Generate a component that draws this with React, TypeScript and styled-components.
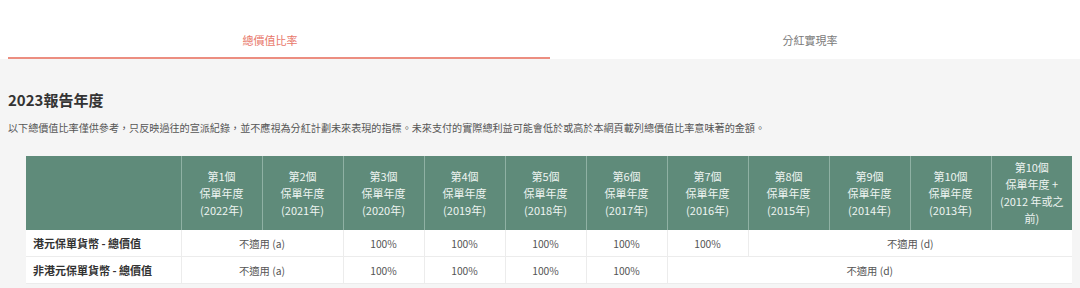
import React from "react";
import styled, { createGlobalStyle } from "styled-components";

const Global = createGlobalStyle`
  html, body { margin: 0; padding: 0; background: #f5f5f5; }
  body { font-family: "Noto Sans CJK TC", "Noto Sans", sans-serif; }
`;

const Page = styled.div`
  width: 1080px;
  height: 288px;
  overflow: hidden;
  background: #f5f5f5;
`;

const TabBar = styled.div`
  display: flex;
  background: #ffffff;
  height: 59px;
`;

const Tab = styled.div<{ $active?: boolean }>`
  position: relative;
  flex: 0 0 540px;
  box-sizing: border-box;
  padding-top: 32px;
  text-align: center;
  font-size: 11px;
  line-height: 16px;
  color: ${(p) => (p.$active ? "#e8776a" : "#7a7a7a")};
  &::after {
    content: "";
    display: ${(p) => (p.$active ? "block" : "none")};
    position: absolute;
    left: 8px;
    right: -10px;
    top: 57px;
    height: 1.5px;
    background: #ec8e80;
  }
`;

const Section = styled.div`
  padding: 31px 8px 0 8px;
`;

const Heading = styled.h2`
  margin: 0;
  font-size: 15px;
  line-height: 20px;
  font-weight: 700;
  color: #333;
`;

const Note = styled.p`
  margin: 10px 0 0 0;
  font-size: 10.1px;
  line-height: 16px;
  color: #555;
  white-space: nowrap;
`;

const Table = styled.table`
  margin: 20px 0 0 18px;
  width: 1046px;
  table-layout: fixed;
  border-collapse: collapse;
  background: #fff;
`;

const HeadCell = styled.th`
  background: #5f8b7a;
  color: #eef4f1;
  font-weight: 400;
  font-size: 11px;
  line-height: 17px;
  text-align: center;
  vertical-align: middle;
  padding: 3px 2px;
  height: 68px;
  border-left: 1px solid #8fb1a4;
  &:first-child { border-left: none; }
`;

const Label = styled.td`
  font-size: 11px;
  font-weight: 700;
  color: #333;
  padding: 0 0 0 7px;
  height: 26px;
  border-bottom: 1px solid #ececec;
  border-right: 1px solid #ececec;
  white-space: nowrap;
`;

const Cell = styled.td`
  font-size: 10.3px;
  color: #555;
  text-align: center;
  height: 26px;
  padding: 0;
  border-bottom: 1px solid #ececec;
  border-right: 1px solid #ececec;
  &:last-child { border-right: none; }
`;

const years = [2022, 2021, 2020, 2019, 2018, 2017, 2016, 2015, 2014, 2013];

export default function App() {
  return (
    <Page>
      <Global />
      <TabBar>
        <Tab $active>總價值比率</Tab>
        <Tab>分紅實現率</Tab>
      </TabBar>
      <Section>
        <Heading>2023報告年度</Heading>
        <Note>
          以下總價值比率僅供參考，只反映過往的宣派紀錄，並不應視為分紅計劃未來表現的指標。未來支付的實際總利益可能會低於或高於本網頁載列總價值比率意味著的金額。
        </Note>
        <Table>
          <colgroup>
            <col style={{ width: 155 }} />
            {Array.from({ length: 11 }).map((_, i) => (
              <col key={i} style={{ width: 81 }} />
            ))}
          </colgroup>
          <thead>
            <tr>
              <HeadCell />
              {years.map((y, i) => (
                <HeadCell key={y}>
                  第{i + 1}個
                  <br />
                  保單年度
                  <br />({y}年)
                </HeadCell>
              ))}
              <HeadCell>
                第10個
                <br />
                保單年度 +
                <br />
                (2012 年或之
                <br />
                前)
              </HeadCell>
            </tr>
          </thead>
          <tbody>
            <tr>
              <Label>港元保單貨幣 - 總價值</Label>
              <Cell colSpan={2}>不適用 (a)</Cell>
              <Cell>100%</Cell>
              <Cell>100%</Cell>
              <Cell>100%</Cell>
              <Cell>100%</Cell>
              <Cell>100%</Cell>
              <Cell colSpan={4}>不適用 (d)</Cell>
            </tr>
            <tr>
              <Label>非港元保單貨幣 - 總價值</Label>
              <Cell colSpan={2}>不適用 (a)</Cell>
              <Cell>100%</Cell>
              <Cell>100%</Cell>
              <Cell>100%</Cell>
              <Cell>100%</Cell>
              <Cell colSpan={5}>不適用 (d)</Cell>
            </tr>
          </tbody>
        </Table>
      </Section>
    </Page>
  );
}
